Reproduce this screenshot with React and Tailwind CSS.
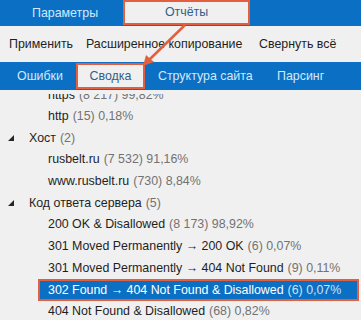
const rows = [
  { level: 1, name: 'https', meta: '(8 217) 99,82%' },
  { level: 1, name: 'http', meta: '(15) 0,18%' },
  { level: 0, name: 'Хост', meta: '(2)' },
  { level: 1, name: 'rusbelt.ru', meta: '(7 532) 91,16%' },
  { level: 1, name: 'www.rusbelt.ru', meta: '(730) 8,84%' },
  { level: 0, name: 'Код ответа сервера', meta: '(5)' },
  { level: 1, name: '200 OK & Disallowed', meta: '(8 173) 98,92%' },
  { level: 1, name: '301 Moved Permanently → 200 OK', meta: '(6) 0,07%' },
  { level: 1, name: '301 Moved Permanently → 404 Not Found', meta: '(9) 0,11%' },
  { level: 1, name: '302 Found → 404 Not Found & Disallowed', meta: '(6) 0,07%', selected: true },
  { level: 1, name: '404 Not Found & Disallowed', meta: '(68) 0,82%' },
];

const Caret = () => (
  <svg width="6" height="6" viewBox="0 0 6 6" className="shrink-0">
    <polygon points="6,0 6,6 0,6" fill="#262626" />
  </svg>
);

const Row = ({ row }) => {
  if (row.selected) {
    return (
      <div className="h-[21.67px] flex">
        <div className="ml-[38px] w-[321px] h-[22px] border-2 border-[#e2603f] bg-[#0b6fc4] flex items-center pl-[8px]">
          <span className="text-white">{row.name}</span>
          <span className="ml-[4px] text-[#cfe2f4]">{row.meta}</span>
        </div>
      </div>
    );
  }
  return (
    <div className="h-[21.67px] flex items-center">
      {row.level === 0 ? (
        <div className="w-[29px] pl-[8px] flex items-center">
          <Caret />
        </div>
      ) : (
        <div className="w-[48px] shrink-0" />
      )}
      <span className="text-[#1f1f1f]">{row.name}</span>
      <span className="ml-[4px] text-[#727272]">{row.meta}</span>
    </div>
  );
};

export default function App() {
  return (
    <div
      className="w-[361px] h-[320px] overflow-hidden bg-[#f0f0f0] text-[12.4px] relative whitespace-nowrap"
      style={{ fontFamily: '"Liberation Sans", Arial, sans-serif' }}
    >
      {/* top tabs */}
      <div className="h-[26px] bg-[#0b6fc4] flex">
        <div className="w-[123px] flex items-center pl-[32px] text-[#d3e9fb]">Параметры</div>
        <div className="w-[127px] h-[25px] border-2 border-[#e2603f] bg-[#f0f0f0] flex items-center justify-center text-[#2f5f8a]">
          Отчёты
        </div>
      </div>

      {/* toolbar */}
      <div className="h-[36px] flex items-center pl-[9px] text-[#1f1f1f]">
        <span className="w-[77px]">Применить</span>
        <span className="w-[173px]">Расширенное копирование</span>
        <span>Свернуть всё</span>
      </div>

      {/* report tabs */}
      <div className="h-[28px] bg-[#0b6fc4] flex items-center text-[#d3e9fb]">
        <span className="pl-[17px] w-[76px]">Ошибки</span>
        <div className="w-[69px] h-[26px] border-2 border-[#e2603f] bg-[#f0f0f0] flex items-center justify-center text-[#2f5f8a]">
          Сводка
        </div>
        <span className="ml-[13px] w-[119px]">Структура сайта</span>
        <span>Парсинг</span>
      </div>

      {/* tree, scrolled so the first row is cut */}
      <div className="mt-[4px] h-[226px] overflow-hidden">
        <div className="mt-[-10px]">
          {rows.map((r, i) => (
            <Row key={i} row={r} />
          ))}
        </div>
      </div>

      {/* callout arrow */}
      <svg className="absolute left-0 top-0 pointer-events-none" width="361" height="100">
        <line x1="185" y1="25" x2="149" y2="60" stroke="#e2603f" strokeWidth="2.5" />
        <polygon points="143,66 146,55 154,62" fill="#e2603f" />
      </svg>
    </div>
  );
}
